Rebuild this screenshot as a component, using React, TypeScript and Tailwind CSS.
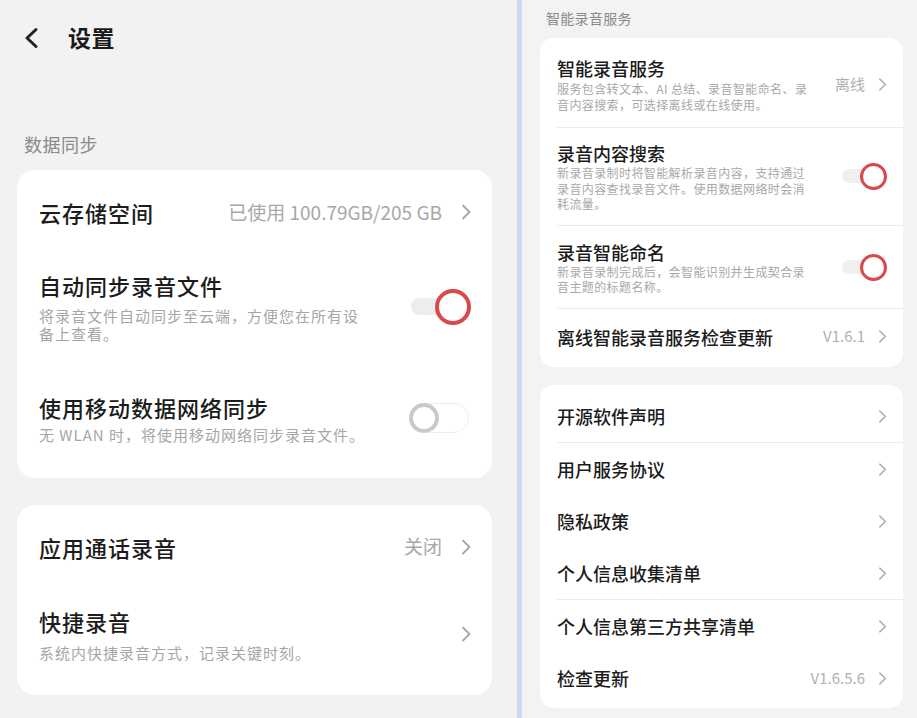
import React from 'react';

function Chevron({ big = false }: { big?: boolean }) {
    if (big) {
        return (
            <svg width="10" height="16" viewBox="0 0 10 16" className="shrink-0">
                <path d="M2 1.5 L8.5 8 L2 14.5" fill="none" stroke="#a6a6a6" strokeWidth="1.8" strokeLinecap="round" strokeLinejoin="round" />
            </svg>
        );
    }
    return (
        <svg width="9" height="13" viewBox="0 0 9 13" className="shrink-0">
            <path d="M1.8 1.2 L7.4 6.5 L1.8 11.8" fill="none" stroke="#b0b0b0" strokeWidth="1.6" strokeLinecap="round" strokeLinejoin="round" />
        </svg>
    );
}

function ToggleOnBig() {
    return (
        <div className="relative w-[60px] h-[36px] shrink-0 flex items-center">
            <div className="w-[52px] h-[17px] rounded-full bg-[#ededed]" />
            <div className="absolute right-0 top-0 w-[36px] h-[36px] rounded-full border-[4px] border-[#d9494c] bg-white" />
        </div>
    );
}

function ToggleOffBig() {
    return (
        <div className="relative w-[60px] h-[30px] shrink-0 rounded-full border-[1.5px] border-[#eeeeee]">
            <div className="absolute -left-[1.5px] -top-[1.5px] w-[30px] h-[30px] rounded-full border-[4px] border-[#c9c9c9] bg-white" />
        </div>
    );
}

function ToggleOnSmall() {
    return (
        <div className="relative w-[45px] h-[27px] shrink-0 flex items-center">
            <div className="w-[40px] h-[14px] rounded-full bg-[#efefef]" />
            <div className="absolute right-0 top-0 w-[27px] h-[27px] rounded-full border-[3.5px] border-[#d9494c] bg-white" />
        </div>
    );
}

function Divider() {
    return <div className="ml-[17px] h-px bg-[#ececec]" />;
}

function SimpleRow({ title, value }: { title: string; value?: string }) {
    return (
        <div className="h-[52px] pl-[17px] pr-[16px] flex items-center justify-between">
            <span className="text-[18px] leading-[24px] font-medium text-[#1c1c1c]">{title}</span>
            <div className="flex items-center gap-[13px]">
                {value && <span className="text-[15px] text-[#b0b0b0]">{value}</span>}
                <Chevron />
            </div>
        </div>
    );
}

export default function App() {
    return (
        <div className="w-[917px] h-[718px] overflow-hidden flex font-['Noto_Sans_CJK_SC',sans-serif]">
            {/* Left panel */}
            <div className="w-[517px] h-full bg-[#f2f2f2] pl-[17px] pr-[25px]">
                <div className="h-[75px] flex items-center">
                    <svg width="16" height="22" viewBox="0 0 16 22" className="ml-[6px]">
                        <path d="M13 2.5 L4 11 L13 19.5" fill="none" stroke="#222" strokeWidth="3" strokeLinecap="round" strokeLinejoin="round" />
                    </svg>
                    <span className="ml-[29px] text-[23px] font-bold text-[#1a1a1a] tracking-[0.5px]">设置</span>
                </div>
                <div className="h-[95px] flex items-center pl-[7px] pt-[43px]">
                    <span className="text-[18px] text-[#8a8a8a] tracking-[0.5px]">数据同步</span>
                </div>

                {/* Card 1 */}
                <div className="bg-white rounded-[18px] h-[308px] pl-[22px] pr-[21px]">
                    <div className="h-[84px] flex items-center justify-between">
                        <span className="text-[22px] leading-[30px] tracking-[1px] font-medium text-[#1c1c1c]">云存储空间</span>
                        <div className="flex items-center gap-[19px]">
                            <span className="text-[19px] text-[#a8a8a8]">已使用 100.79GB/205 GB</span>
                            <Chevron big />
                        </div>
                    </div>
                    <div className="pt-[16px] pb-[22px] flex items-center justify-between">
                        <div>
                            <div className="text-[22px] leading-[30px] tracking-[1px] font-medium text-[#1c1c1c]">自动同步录音文件</div>
                            <div className="mt-[7px] text-[15px] leading-[18px] tracking-[1px] text-[#a6a6a6]">
                                将录音文件自动同步至云端，方便您在所有设<br />备上查看。
                            </div>
                        </div>
                        <ToggleOnBig />
                    </div>
                    <div className="pt-[27px] flex items-center justify-between">
                        <div>
                            <div className="text-[22px] leading-[30px] tracking-[1px] font-medium text-[#1c1c1c]">使用移动数据网络同步</div>
                            <div className="mt-[4px] text-[15px] leading-[18px] tracking-[1px] text-[#a6a6a6]">
                                无 WLAN 时，将使用移动网络同步录音文件。
                            </div>
                        </div>
                        <div className="pr-[2px]">
                            <ToggleOffBig />
                        </div>
                    </div>
                </div>

                {/* Card 2 */}
                <div className="mt-[27px] bg-white rounded-[18px] h-[190px] pl-[22px] pr-[21px]">
                    <div className="h-[83px] flex items-center justify-between">
                        <span className="text-[22px] leading-[30px] tracking-[1px] font-medium text-[#1c1c1c]">应用通话录音</span>
                        <div className="flex items-center gap-[19px]">
                            <span className="text-[19px] text-[#a8a8a8]">关闭</span>
                            <Chevron big />
                        </div>
                    </div>
                    <div className="pt-[18px] flex items-center justify-between">
                        <div>
                            <div className="text-[22px] leading-[30px] tracking-[1px] font-medium text-[#1c1c1c]">快捷录音</div>
                            <div className="mt-[8px] text-[15px] leading-[18px] tracking-[1px] text-[#a6a6a6]">
                                系统内快捷录音方式，记录关键时刻。
                            </div>
                        </div>
                        <Chevron big />
                    </div>
                </div>
            </div>

            {/* Divider between panes */}
            <div className="w-[5px] h-full bg-[#cbdaf3]" />

            {/* Right panel */}
            <div className="flex-1 h-full bg-[#f3f3f3] pl-[18px] pr-[14px]">
                <div className="h-[38px] flex items-center pl-[6px] pb-[2px]">
                    <span className="text-[14px] text-[#8a8a8a] tracking-[0.3px]">智能录音服务</span>
                </div>

                <div className="bg-white rounded-[14px] h-[329px] overflow-hidden">
                    <div className="pt-[18px] pb-[14px] pl-[17px] pr-[16px] flex items-center justify-between">
                        <div>
                            <div className="text-[18px] leading-[24px] font-medium text-[#1c1c1c]">智能录音服务</div>
                            <div className="mt-px text-[12px] leading-[16px] tracking-[0.4px] text-[#a8a8a8]">
                                服务包含转文本、AI 总结、录音智能命名、录<br />音内容搜索，可选择离线或在线使用。
                            </div>
                        </div>
                        <div className="flex items-center gap-[13px]">
                            <span className="text-[15px] text-[#b0b0b0]">离线</span>
                            <Chevron />
                        </div>
                    </div>
                    <Divider />
                    <div className="pt-[13px] pb-[13px] pl-[17px] pr-[16px] flex items-center justify-between">
                        <div>
                            <div className="text-[18px] leading-[24px] font-medium text-[#1c1c1c]">录音内容搜索</div>
                            <div className="text-[12px] leading-[15.5px] tracking-[0.4px] text-[#a8a8a8]">
                                新录音录制时将智能解析录音内容，支持通过<br />录音内容查找录音文件。使用数据网络时会消<br />耗流量。
                            </div>
                        </div>
                        <ToggleOnSmall />
                    </div>
                    <Divider />
                    <div className="pt-[14px] pb-[13px] pl-[17px] pr-[16px] flex items-center justify-between">
                        <div>
                            <div className="text-[18px] leading-[24px] font-medium text-[#1c1c1c]">录音智能命名</div>
                            <div className="text-[12px] leading-[15.5px] tracking-[0.4px] text-[#a8a8a8]">
                                新录音录制完成后，会智能识别并生成契合录<br />音主题的标题名称。
                            </div>
                        </div>
                        <ToggleOnSmall />
                    </div>
                    <Divider />
                    <div className="h-[56px] pl-[17px] pr-[16px] flex items-center justify-between">
                        <span className="text-[18px] leading-[24px] font-medium text-[#1c1c1c]">离线智能录音服务检查更新</span>
                        <div className="flex items-center gap-[13px]">
                            <span className="text-[15px] text-[#b0b0b0]">V1.6.1</span>
                            <Chevron />
                        </div>
                    </div>
                </div>

                <div className="mt-[18px] bg-white rounded-[14px] h-[323px] pt-[5px] overflow-hidden">
                    <SimpleRow title="开源软件声明" />
                    <Divider />
                    <SimpleRow title="用户服务协议" />
                    <SimpleRow title="隐私政策" />
                    <SimpleRow title="个人信息收集清单" />
                    <Divider />
                    <SimpleRow title="个人信息第三方共享清单" />
                    <SimpleRow title="检查更新" value="V1.6.5.6" />
                </div>
            </div>
        </div>
    );
}
